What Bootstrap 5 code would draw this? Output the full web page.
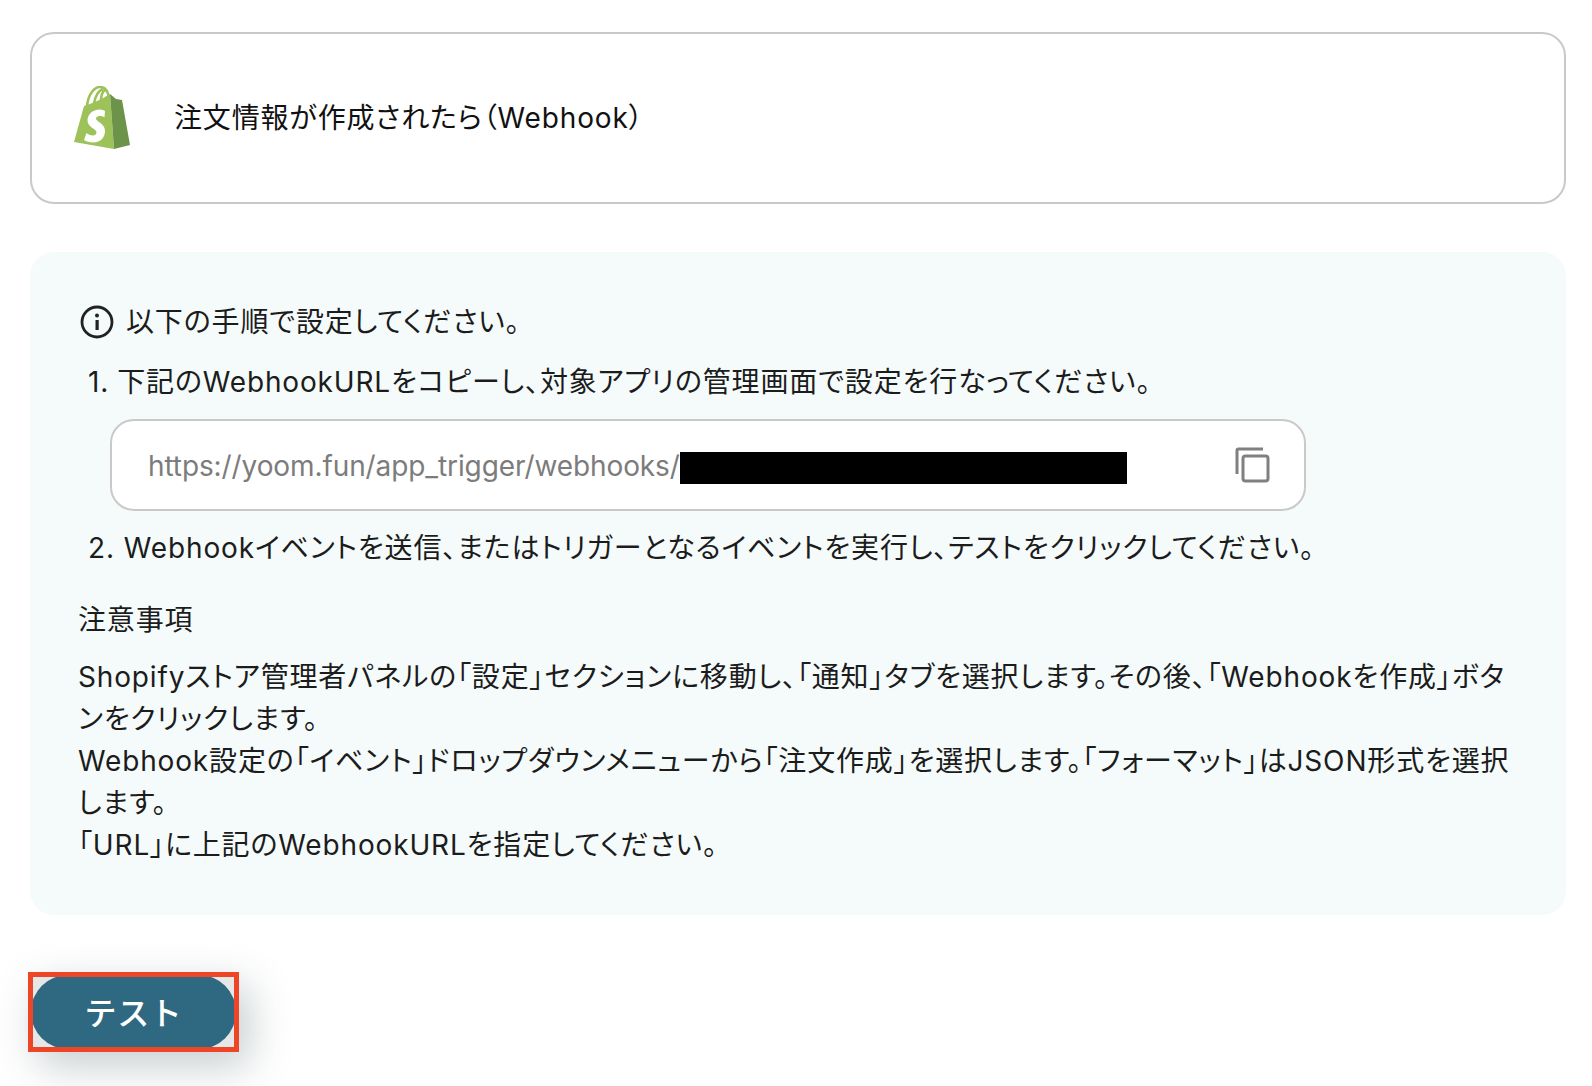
<!DOCTYPE html>
<html lang="ja">
<head>
<meta charset="utf-8">
<title>Webhook</title>
<link href="https://cdn.jsdelivr.net/npm/bootstrap@5.3.0/dist/css/bootstrap.min.css" rel="stylesheet">
<style>
html,body{height:1086px;overflow:hidden}
body{background:#fff;color:#1c1c1c;font-family:Inter,"Noto Sans CJK JP",sans-serif;font-size:28px;line-height:42px;font-feature-settings:"palt";letter-spacing:.85px;padding:32px 26px 0 30px}
.app-box{height:172px;border:2px solid #c9c9c9;border-radius:24px;padding-left:41px;gap:43px}
.app-box svg{width:58px;height:64px;flex:none;margin-top:-1px}
.app-title{margin-top:-1px;color:#111}
.guide{margin-top:48px;height:663px;background:#f5fbfb;border-radius:24px;padding:48px 48px 0 48px}
.guide-head{height:44px;gap:11px;margin:0 0 17px 1px}
.guide-head svg{width:36px;height:36px;flex:none}
.step{padding-left:10px;height:42px}
.step-one{gap:8px}
.step-two{gap:9px}
.url-box{margin:16px 0 16px 32px;width:1196px;height:92px;background:#fff;border:2px solid #c9c9c9;border-radius:24px;padding:0 33px 0 36px;color:#7c7c7c}
.url-text{letter-spacing:-.1px;margin-top:1px}
.mask{display:inline-block;width:447px;height:32px;background:#000;vertical-align:-8px}
.url-box svg{width:36px;height:36px}
.note-title{margin-top:30px;margin-bottom:15px}
.cta-wrap{margin-top:57px;margin-left:-2px;width:211px;height:80px;border:5px solid #ee4527;background:#e6e8e8;overflow:hidden;box-shadow:10px 14px 42px rgba(40,60,70,.26)}
.cta{width:calc(100% + 4px);height:calc(100% + 4px);margin:-2px;padding:3px 0 0;border:0;border-radius:40px;background:#2e6881;color:#fff;font-size:32px;font-weight:500;line-height:1;letter-spacing:.02em}
</style>
</head>
<body>
<div class="app-box d-flex align-items-center">
<svg viewBox="0 0 58 64" aria-hidden="true">
<path d="M1 56 11 20 Q24 16 37 8 L41 63Z" fill="#9dc25a"/>
<path d="M41 63 57 59 49 14 43 13 37 8Z" fill="#6b934a"/>
<path d="M14 20C15 9 21 1 27 1c5 0 8 4 9 11M21 18C22 11 25 5 30 3M28 15C28 10 29 6 32 4" fill="none" stroke="#9dc25a" stroke-width="2.6"/>
<path d="M32 25c-2-1-3.500-1.500-5.500-1.500-7 0-12 5-12 11 0 7 9 8 9 12 0 2-2 3-3.500 3-2.500 0-5.500-1.500-6.500-2.500l-2.500 7c2 1.500 5.500 2.500 9 2.500 8 0 12-5.500 12-11.500 0-8-9-9-9-12.500 0-1.500 1.500-2.500 3.500-2.500 2.500 0 4 .7 5 1.200z" fill="#fff"/>
</svg>
<div class="app-title">注文情報が作成されたら（Webhook）</div>
</div>

<div class="guide">
<div class="guide-head d-flex align-items-center">
<svg viewBox="0 0 36 36" aria-hidden="true"><circle cx="18" cy="18" r="15" fill="none" stroke="#222" stroke-width="2.800"/><rect x="16.500" y="16" width="3.200" height="10" fill="#222"/><circle cx="18" cy="11.500" r="2" fill="#222"/></svg>
<span>以下の手順で設定してください。</span>
</div>
<div class="step step-one d-flex"><span>1.</span><span>下記のWebhookURLをコピーし、対象アプリの管理画面で設定を行なってください。</span></div>
<div class="url-box d-flex align-items-center justify-content-between">
<span class="url-text">https://yoom.fun/app_trigger/webhooks/<span class="mask"></span></span>
<svg viewBox="0 0 36 36" aria-hidden="true"><path d="M2 27V3.500Q2 2 3.500 2H28" fill="none" stroke="#808080" stroke-width="3"/><rect x="8" y="9" width="25" height="25" rx="2.500" fill="none" stroke="#808080" stroke-width="3"/></svg>
</div>
<div class="step step-two d-flex"><span>2.</span><span>Webhookイベントを送信、またはトリガーとなるイベントを実行し、テストをクリックしてください。</span></div>
<div class="note-title">注意事項</div>
<div>Shopifyストア管理者パネルの「設定」セクションに移動し、「通知」タブを選択します。その後、「Webhookを作成」ボタンをクリックします。<br>Webhook設定の「イベント」ドロップダウンメニューから「注文作成」を選択します。「フォーマット」はJSON形式を選択します。<br>「URL」に上記のWebhookURLを指定してください。</div>
</div>

<div class="cta-wrap"><button type="button" class="btn cta d-block">テスト</button></div>
</body>
</html>
